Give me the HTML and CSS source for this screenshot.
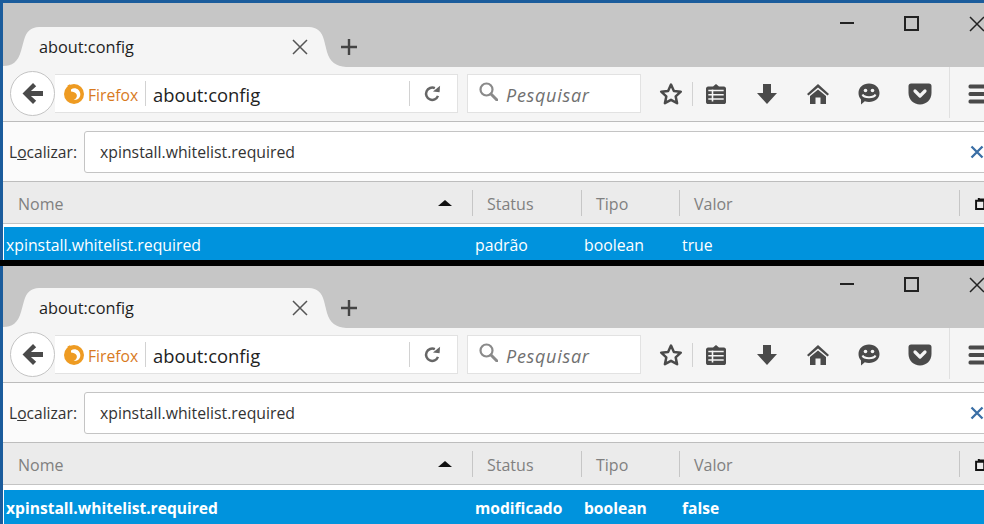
FILE: index.html
```html
<!DOCTYPE html>
<html lang="pt">
<head>
<meta charset="utf-8">
<title>about:config</title>
<link rel="stylesheet" href="styles.css">
</head>
<body>
<svg class="defs" width="0" height="0" aria-hidden="true">
  <defs>
    <symbol id="i-tab" viewBox="0 0 343 40" preserveAspectRatio="none"><path d="M0 40V39C9 39 15 35 18 24L21 13C23 5 28 0 36 0H306C314 0 319 5 321 13L324 25C327 35 333 39 343 40Z"/></symbol>
    <symbol id="i-x" viewBox="0 0 16 16"><path d="M1 1L15 15M15 1L1 15" fill="none" stroke="currentColor" stroke-width="1.5"/></symbol>
    <symbol id="i-plus" viewBox="0 0 18 18"><path d="M9 1V17M1 9H17" fill="none" stroke="currentColor" stroke-width="2.4"/></symbol>
    <symbol id="i-back" viewBox="0 0 20 20"><path d="M10.5 0L0.5 10L10.5 20L13.5 17L8.5 12.3H20V7.7H8.5L13.5 3Z" fill="currentColor"/></symbol>
    <symbol id="i-ff" viewBox="0 0 20 20"><circle cx="10" cy="10" r="10" fill="#ee9b22"/><path d="M3.5 1.5L6 0.3L6.5 4L4.5 5Z" fill="#ee9b22"/><path d="M7 5.5C10.5 2.8 15.8 5 16.3 9.7C16.7 13.5 13.3 16.5 9.5 15.8C12.3 15 13.5 12.3 12.5 10.2C11.5 8.2 9 8 7 7.5Z" fill="#fff"/></symbol>
    <symbol id="i-reload" viewBox="0 0 18 18"><path d="M14.8 11.5A6.5 6.5 0 1 1 11.5 3.4" fill="none" stroke="currentColor" stroke-width="2.6"/><path d="M9.5 6.8L16.5 7.8L17 0.8Z" fill="currentColor"/></symbol>
    <symbol id="i-search" viewBox="0 0 19 19"><circle cx="7.5" cy="7.5" r="6" fill="none" stroke="currentColor" stroke-width="2.2"/><path d="M12 12L18 18" stroke="currentColor" stroke-width="3" stroke-linecap="round"/></symbol>
    <symbol id="i-star" viewBox="0 0 24 24"><path d="M12 2.6L14.9 8.9L21.8 9.7L16.7 14.4L18.1 21.2L12 17.8L5.9 21.2L7.3 14.4L2.2 9.7L9.1 8.9Z" fill="none" stroke="currentColor" stroke-width="2.5" stroke-linejoin="round"/></symbol>
    <symbol id="i-clip" viewBox="0 0 22 22"><path d="M3 3.5H8L11 1L14 3.5H19C20 3.5 21 4.5 21 5.5V19C21 20.5 20 21 19 21H3C2 21 1 20.5 1 19V5.5C1 4.5 2 3.5 3 3.5Z" fill="currentColor"/><path d="M3.3 7.5H18.7M3.3 11.8H18.7M3.3 16H18.7M7.5 6.5V18.5" fill="none" stroke="#f5f5f5" stroke-width="1.6"/></symbol>
    <symbol id="i-down" viewBox="0 0 22 22"><path d="M7 1H15V10H21L11 21L1 10H7Z" fill="currentColor"/></symbol>
    <symbol id="i-home" viewBox="0 0 22 22"><path d="M11 1L22 11L20.5 12.5L11 4.5L1.5 12.5L0 11Z" fill="currentColor"/><path d="M11 6.5L19 13V21H13.5V14.5H8.5V21H3V13Z" fill="currentColor"/></symbol>
    <symbol id="i-smile" viewBox="0 0 22 22"><path d="M11 0.5C17 0.5 21.5 4.5 21.5 10C21.5 15.5 17 19 11 19C9.5 19 8 18.8 6.8 18.3L3 21.5V16.5C1.3 14.8 0.5 12.5 0.5 10C0.5 4.5 5 0.5 11 0.5Z" fill="currentColor"/><circle cx="7.5" cy="7.5" r="1.8" fill="#f5f5f5"/><circle cx="14.5" cy="7.5" r="1.8" fill="#f5f5f5"/><path d="M4.5 11.5C6 15 16 15 17.5 11.5" fill="none" stroke="#f5f5f5" stroke-width="2"/></symbol>
    <symbol id="i-pocket" viewBox="0 0 24 22"><path d="M3 0.5H21C22.5 0.5 23.5 1.5 23.5 3V10C23.5 16.5 18.5 21.5 12 21.5C5.5 21.5 0.5 16.5 0.5 10V3C0.5 1.5 1.5 0.5 3 0.5Z" fill="currentColor"/><path d="M7 8L12 13L17 8" fill="none" stroke="#f5f5f5" stroke-width="3.2" stroke-linecap="round" stroke-linejoin="round"/></symbol>
    <symbol id="i-menu" viewBox="0 0 22 20"><path d="M2 0.5H22V4.5H2C0 4.5 0 0.5 2 0.5ZM2 8H22V12H2C0 12 0 8 2 8ZM2 15.5H22V19.5H2C0 19.5 0 15.5 2 15.5Z" fill="currentColor"/></symbol>
    <symbol id="i-clear" viewBox="0 0 14 14"><path d="M1.5 1.5L12.5 12.5M12.5 1.5L1.5 12.5" fill="none" stroke="currentColor" stroke-width="2.3"/></symbol>
    <symbol id="i-cols" viewBox="0 0 12 12"><path d="M3.5 1V2.2H11V9M1 3.5H8.5V11H1Z" fill="none" stroke="currentColor" stroke-width="1.8"/></symbol>
  </defs>
</svg>

<section class="window window-first">
  <div class="tabstrip">
    <div class="tab">
      <svg class="tab-shape"><use href="#i-tab"/></svg>
      <span class="tab-title">about:config</span>
      <svg class="tab-close"><use href="#i-x"/></svg>
    </div>
    <svg class="new-tab"><use href="#i-plus"/></svg>
    <div class="win-controls">
      <span class="win-min"></span>
      <span class="win-max"></span>
      <svg class="win-close"><use href="#i-x"/></svg>
    </div>
  </div>
  <div class="nav">
    <div class="back"><svg class="back-icon"><use href="#i-back"/></svg></div>
    <div class="urlbar">
      <svg class="ff-logo"><use href="#i-ff"/></svg>
      <span class="ff-name">Firefox</span>
      <span class="url-sep"></span>
      <span class="url">about:config</span>
      <span class="url-sep url-sep-end"></span>
      <svg class="reload"><use href="#i-reload"/></svg>
    </div>
    <div class="searchbar">
      <svg class="search-icon"><use href="#i-search"/></svg>
      <span class="search-text">Pesquisar</span>
    </div>
    <div class="tools">
      <div class="tool tool-star"><svg class="icon-star"><use href="#i-star"/></svg></div>
      <div class="tool tool-clip"><svg class="icon"><use href="#i-clip"/></svg></div>
      <div class="tool"><svg class="icon"><use href="#i-down"/></svg></div>
      <div class="tool"><svg class="icon"><use href="#i-home"/></svg></div>
      <div class="tool"><svg class="icon"><use href="#i-smile"/></svg></div>
      <div class="tool"><svg class="icon-pocket"><use href="#i-pocket"/></svg></div>
      <span class="tool-sep"></span>
      <svg class="icon-menu"><use href="#i-menu"/></svg>
    </div>
  </div>
  <div class="findbar">
    <label class="find-label">L<u>o</u>calizar:</label>
    <div class="find-input">
      <span>xpinstall.whitelist.required</span>
      <svg class="find-clear"><use href="#i-clear"/></svg>
    </div>
  </div>
  <div class="thead">
    <div class="th th-name">Nome<span class="sort-arrow"></span></div>
    <div class="th">Status</div>
    <div class="th">Tipo</div>
    <div class="th">Valor</div>
    <div class="th th-picker"><svg class="col-picker"><use href="#i-cols"/></svg></div>
  </div>
  <div class="row">
    <div>xpinstall.whitelist.required</div>
    <div>padrão</div>
    <div>boolean</div>
    <div>true</div>
  </div>
</section>

<section class="window window-second">
  <div class="tabstrip">
    <div class="tab">
      <svg class="tab-shape"><use href="#i-tab"/></svg>
      <span class="tab-title">about:config</span>
      <svg class="tab-close"><use href="#i-x"/></svg>
    </div>
    <svg class="new-tab"><use href="#i-plus"/></svg>
    <div class="win-controls">
      <span class="win-min"></span>
      <span class="win-max"></span>
      <svg class="win-close"><use href="#i-x"/></svg>
    </div>
  </div>
  <div class="nav">
    <div class="back"><svg class="back-icon"><use href="#i-back"/></svg></div>
    <div class="urlbar">
      <svg class="ff-logo"><use href="#i-ff"/></svg>
      <span class="ff-name">Firefox</span>
      <span class="url-sep"></span>
      <span class="url">about:config</span>
      <span class="url-sep url-sep-end"></span>
      <svg class="reload"><use href="#i-reload"/></svg>
    </div>
    <div class="searchbar">
      <svg class="search-icon"><use href="#i-search"/></svg>
      <span class="search-text">Pesquisar</span>
    </div>
    <div class="tools">
      <div class="tool tool-star"><svg class="icon-star"><use href="#i-star"/></svg></div>
      <div class="tool tool-clip"><svg class="icon"><use href="#i-clip"/></svg></div>
      <div class="tool"><svg class="icon"><use href="#i-down"/></svg></div>
      <div class="tool"><svg class="icon"><use href="#i-home"/></svg></div>
      <div class="tool"><svg class="icon"><use href="#i-smile"/></svg></div>
      <div class="tool"><svg class="icon-pocket"><use href="#i-pocket"/></svg></div>
      <span class="tool-sep"></span>
      <svg class="icon-menu"><use href="#i-menu"/></svg>
    </div>
  </div>
  <div class="findbar">
    <label class="find-label">L<u>o</u>calizar:</label>
    <div class="find-input">
      <span>xpinstall.whitelist.required</span>
      <svg class="find-clear"><use href="#i-clear"/></svg>
    </div>
  </div>
  <div class="thead">
    <div class="th th-name">Nome<span class="sort-arrow"></span></div>
    <div class="th">Status</div>
    <div class="th">Tipo</div>
    <div class="th">Valor</div>
    <div class="th th-picker"><svg class="col-picker"><use href="#i-cols"/></svg></div>
  </div>
  <div class="row row-modified">
    <div>xpinstall.whitelist.required</div>
    <div>modificado</div>
    <div>boolean</div>
    <div>false</div>
  </div>
</section>
</body>
</html>
```

FILE: styles.css
```css
* { box-sizing: border-box; }

html, body {
  margin: 0;
  padding: 0;
  width: 984px;
  height: 524px;
  overflow: hidden;
  background: #000;
  font-family: "Open Sans", "Noto Sans", sans-serif;
}

.defs { position: absolute; }

.window {
  width: 984px;
  overflow: hidden;
  border-left: 3px solid #1b5c9c;
  background: #fff;
}

.window-first {
  height: 260px;
  border-top: 3px solid #1b5c9c;
  margin-bottom: 6px;
}

.window-second { height: 258px; }

/* tab strip */
.tabstrip {
  display: flex;
  align-items: flex-end;
  height: 64px;
  background: #c6c6c6;
}

.window-second .tabstrip { height: 62px; }

.tab {
  position: relative;
  flex: none;
  display: flex;
  align-items: center;
  width: 343px;
  height: 40px;
  padding-left: 36px;
  color: #1e1e1e;
}

.tab-shape {
  position: absolute;
  left: 0;
  top: 0;
  width: 343px;
  height: 40px;
  fill: #f5f5f5;
}

.tab-title {
  position: relative;
  font-size: 16.3px;
  line-height: 40px;
}

.tab-close {
  position: absolute;
  left: 289px;
  top: 12px;
  width: 16px;
  height: 16px;
  color: #555;
}

.new-tab {
  flex: none;
  width: 18px;
  height: 18px;
  margin: 0 0 11px -6px;
  color: #444;
}

.win-controls {
  display: flex;
  align-items: center;
  height: 15px;
  margin: 0 0 36px 482px;
  flex: none;
}

.win-min {
  width: 14px;
  height: 2px;
  background: #222;
  margin-top: -2px;
}

.win-max {
  width: 15px;
  height: 15px;
  margin-left: 50px;
  border: 2px solid #222;
}

.win-close {
  width: 16px;
  height: 16px;
  margin-left: 50px;
  flex: none;
  color: #222;
}

/* navigation toolbar */
.nav {
  display: flex;
  align-items: center;
  height: 55px;
  padding-left: 7px;
  background: #f5f5f5;
  border-bottom: 1px solid #bcbcbc;
}

.back {
  position: relative;
  z-index: 1;
  flex: none;
  display: flex;
  align-items: center;
  justify-content: center;
  width: 45px;
  height: 45px;
  border: 1px solid #c4c4c4;
  border-radius: 50%;
  background: #fff;
  color: #4a4a4a;
  margin-top: -1px;
}

.back-icon { width: 21px; height: 21px; }

.urlbar {
  flex: none;
  display: flex;
  align-items: center;
  width: 403px;
  height: 39px;
  margin-top: -1px;
  padding-left: 9px;
  background: #fff;
  border: 1px solid #e2e2e2;
  border-left: 0;
}

.ff-logo { width: 20px; height: 20px; flex: none; }

.ff-name {
  margin: 2px 0 0 4px;
  font-size: 15.7px;
  color: #d87a1e;
  width: 50px;
  flex: none;
}

.url-sep {
  flex: none;
  width: 1px;
  height: 25px;
  margin-left: 7px;
  background: #d2d2d2;
}

.url {
  margin: 2px 0 0 7px;
  font-size: 18.4px;
  color: #222;
  width: 255px;
  flex: none;
}

.url-sep-end { margin-left: 1px; }

.reload {
  width: 17px;
  height: 17px;
  margin-left: 14px;
  color: #666;
  flex: none;
}

.searchbar {
  flex: none;
  display: flex;
  align-items: center;
  width: 174px;
  height: 39px;
  margin: -1px 0 0 9px;
  padding-left: 11px;
  background: #fff;
  border: 1px solid #e2e2e2;
}

.search-icon { width: 19px; height: 19px; color: #8a8a8a; flex: none; margin-top: -4px; }

.search-text {
  margin: 2px 0 0 8px;
  font-size: 18px;
  font-style: italic;
  letter-spacing: 0.7px;
  color: #707070;
}

.tools {
  flex: none;
  display: flex;
  align-items: center;
  align-self: stretch;
  margin-left: 8px;
  color: #4a4a4a;
}

.tool {
  flex: none;
  display: flex;
  align-items: center;
  justify-content: center;
  width: 51px;
  height: 100%;
}

.tool-star {
  width: 44px;
  position: relative;
}

.tool-star::after {
  content: "";
  position: absolute;
  right: 0;
  top: 15px;
  width: 1px;
  height: 24px;
  background: #d2d2d2;
}

.tool-clip { width: 48px; padding-right: 3px; }

.icon { width: 22px; height: 22px; }
.icon-star { width: 24px; height: 24px; }
.icon-pocket { width: 24px; height: 22px; }

.tool-sep {
  flex: none;
  width: 1px;
  height: 51px;
  margin: 0 0 3px 4px;
  background: #e0e0e0;
}

.icon-menu {
  flex: none;
  width: 22px;
  height: 20px;
  margin-left: 18px;
}

/* find bar */
.findbar {
  display: flex;
  align-items: center;
  height: 60px;
  padding-left: 6px;
  background: #fbfbfb;
  border-bottom: 1px solid #bdbdbd;
}

.find-label {
  flex: none;
  width: 75px;
  font-size: 15.6px;
  color: #333;
}

.find-input {
  flex: none;
  display: flex;
  align-items: center;
  justify-content: space-between;
  width: 940px;
  height: 42px;
  padding-left: 15px;
  background: #fff;
  border: 1px solid #c4c4c4;
  border-radius: 3px;
  font-size: 15.8px;
  color: #333;
}

.find-clear {
  width: 14px;
  height: 14px;
  margin-right: 39px;
  color: #3a6ea5;
}

/* table */
.thead {
  display: grid;
  grid-template-columns: 469px 109px 98px 280px 25px;
  height: 42px;
  background: #ebebeb;
  border-bottom: 1px solid #c4c4c4;
  margin-bottom: 3px;
}

.window-second .thead { margin-bottom: 5px; }

.th {
  position: relative;
  display: flex;
  align-items: center;
  padding: 2px 0 0 15px;
  font-size: 16px;
  color: #808080;
}

.th::before {
  content: "";
  position: absolute;
  left: 0;
  top: 8px;
  bottom: 7px;
  width: 1px;
  background: #c6c6c6;
}

.th-name::before { display: none; }

.th-picker { padding-left: 16px; }

.sort-arrow {
  position: absolute;
  left: 435px;
  top: 18px;
  border-left: 7px solid transparent;
  border-right: 7px solid transparent;
  border-bottom: 6px solid #111;
}

.col-picker { width: 13px; height: 13px; color: #111; flex: none; }

.row {
  display: grid;
  grid-template-columns: 466px 109px 98px 280px;
  height: 33px;
  align-items: center;
  padding: 2px 0 0 2px;
  margin-left: 1px;
  background: #0093dd;
  color: #fff;
  font-size: 15.8px;
}

.row > div { white-space: nowrap; }
.row > div + div { padding-left: 3px; }

.row-modified {
  height: 35px;
  padding-top: 0;
  font-size: 15.6px;
  font-weight: 700;
}
```
